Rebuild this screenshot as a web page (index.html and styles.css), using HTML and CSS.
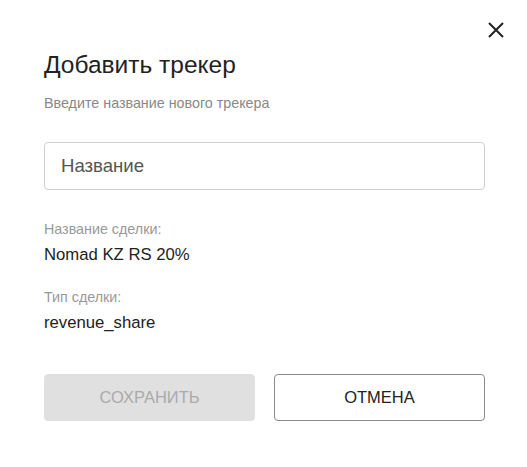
FILE: index.html
```html
<!DOCTYPE html>
<html lang="ru">
<head>
<meta charset="utf-8">
<title>Добавить трекер</title>
<link rel="stylesheet" href="styles.css">
</head>
<body>
<div class="dialog">
  <button class="close" aria-label="Закрыть">
    <svg width="16" height="16" viewBox="0 0 16 16"><path d="M1 1L15 15M15 1L1 15" stroke="#222" stroke-width="2" fill="none"/></svg>
  </button>
  <h1 class="title">Добавить трекер</h1>
  <p class="subtitle">Введите название нового трекера</p>
  <input class="field" type="text" placeholder="Название">
  <div class="info">
    <div class="label">Название сделки:</div>
    <div class="value">Nomad KZ RS 20%</div>
  </div>
  <div class="info info-second">
    <div class="label">Тип сделки:</div>
    <div class="value">revenue_share</div>
  </div>
  <div class="actions">
    <button class="btn btn-save" disabled>Сохранить</button>
    <button class="btn btn-cancel">Отмена</button>
  </div>
</div>
</body>
</html>
```
FILE: styles.css
```css
* { box-sizing: border-box; }
html, body {
  margin: 0;
  padding: 0;
  background: #fff;
  font-family: "Liberation Sans", Arial, sans-serif;
}
.dialog {
  position: relative;
  width: 527px;
  height: 467px;
  padding: 51px 42px 0 44px;
}
.close {
  position: absolute;
  top: 22px;
  right: 23px;
  width: 16px;
  height: 16px;
  padding: 0;
  border: 0;
  background: none;
  cursor: pointer;
  display: block;
}
.close svg { display: block; }
.title {
  margin: 0 0 16px;
  font-size: 24.5px;
  line-height: 28px;
  font-weight: 400;
  color: #222;
}
.subtitle {
  margin: 0 0 31px;
  font-size: 14.3px;
  line-height: 16px;
  color: #888;
}
.field {
  display: block;
  width: 441px;
  height: 48px;
  padding: 0 16px;
  border: 1px solid #cfcfcf;
  border-radius: 4px;
  font-family: inherit;
  font-size: 18.6px;
  color: #222;
  outline: none;
}
.field::placeholder { color: #555; }
.info { margin-top: 31px; }
.info-second { margin-top: 25px; }
.label {
  font-size: 14.3px;
  line-height: 16px;
  color: #999;
  margin-bottom: 9px;
}
.value {
  font-size: 16.7px;
  line-height: 18px;
  color: #222;
}
.actions {
  display: grid;
  grid-template-columns: 1fr 1fr;
  gap: 19px;
  width: 441px;
  margin-top: 42px;
}
.btn {
  height: 47px;
  border-radius: 4px;
  font-family: inherit;
  font-size: 16.5px;
  text-transform: uppercase;
  padding: 0;
}
.btn-save {
  background: #e0e0e0;
  color: #aaa;
  border: 1px solid #e0e0e0;
}
.btn-cancel {
  background: #fff;
  color: #222;
  border: 1px solid #8a8a8a;
  cursor: pointer;
}
```
